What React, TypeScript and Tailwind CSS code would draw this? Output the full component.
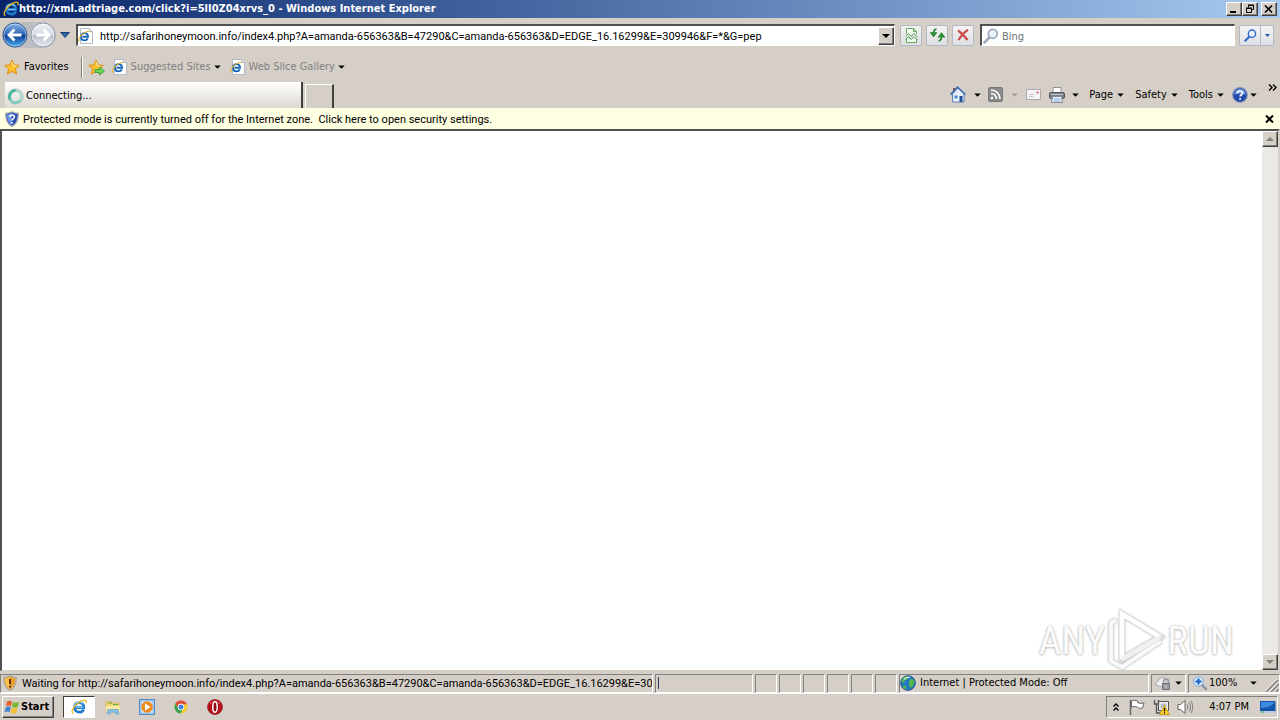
import type { ReactNode } from "react";

function Caret({ className = "fill-black" }: { className?: string }) {
  return (
    <svg width="7" height="4" viewBox="0 0 7 4" className={`shrink-0 ${className}`} aria-hidden="true">
      <path d="M.3.4h6.400L3.500 3.700z" />
    </svg>
  );
}

function IeGlyph({ size = 16 }: { size?: number }) {
  return (
    <svg width={size} height={size} viewBox="0 0 16 16" className="shrink-0" aria-hidden="true">
      <path d="M12.600 10.400c-.8 1.900-2.300 2.800-4.300 2.800-2.900 0-4.700-1.900-4.700-4.700 0-2.900 1.900-4.800 4.700-4.800 2.900 0 4.600 1.900 4.500 4.900H5" fill="none" stroke="#1f78cc" strokeWidth="2.700" />
      <path d="M12.400 8.300H5M3.200 7C3.900 4.700 5.600 3.300 8.200 3.200c1.800 0 3.100.7 3.900 2" fill="none" stroke="#74c8fa" strokeWidth="1.200" />
      <path d="M2.400 14.600C.2 13.800.9 10.600 4 7 7.600 2.800 13 .2 14.700 1.600c.7.600.5 1.700 0 2.700" stroke="#e9b825" strokeWidth="1.300" fill="none" />
    </svg>
  );
}

function IePage({ size = 16 }: { size?: number }) {
  return (
    <svg width={size} height={size} viewBox="0 0 16 16" className="shrink-0" aria-hidden="true">
      <path d="M2.500.5h9l3 3v12h-12z" fill="#fff" stroke="#b5bac3" />
      <path d="M11.500.5v3h3" fill="#e6edf6" stroke="#b5bac3" />
      <path d="M9.800 10.400c-.6 1.300-1.700 2-3.200 2C4.400 12.400 3 10.900 3 8.800s1.500-3.700 3.700-3.700c2.100 0 3.400 1.400 3.300 3.700H4.600" fill="none" stroke="#1565b8" strokeWidth="1.900" />
      <path d="M1.100 13.600C-.2 12.400 1 9.500 4 6.700 7 3.900 10.500 2.700 11.300 4" fill="none" stroke="#e3b22c" strokeWidth="1.100" />
    </svg>
  );
}

function Star({ add = false }: { add?: boolean }) {
  return (
    <svg width="17" height="17" viewBox="0 0 17 17" className="shrink-0" aria-hidden="true">
      <path d="M8 1l2.100 4.900 5.200.5-3.900 3.500 1.200 5.200L8 12.400l-4.600 2.700 1.200-5.200L.7 6.400l5.200-.5z" fill="#fcc02f" stroke="#dc8f14" strokeLinejoin="round" />
      <path d="M8 3l1.300 3.700 3 .5" fill="none" stroke="#fff1a8" />
      {add && <path d="M7 10.500h4.500v-2.500l5 4-5 4v-2.500H7z" fill="#6bd857" stroke="#2a9a2e" strokeWidth=".8" />}
    </svg>
  );
}

function Orb({ back = false }: { back?: boolean }) {
  return (
    <svg width="26" height="26" viewBox="0 0 26 26" aria-hidden="true">
      <defs>
        <linearGradient id={back ? "orbBack" : "orbNext"} x1="0" y1="0" x2="0" y2="1">
          <stop offset="0" stopColor={back ? "#8db8ea" : "#eef1f6"} />
          <stop offset=".48" stopColor={back ? "#2a62b8" : "#d5dae3"} />
          <stop offset=".52" stopColor={back ? "#0c3a92" : "#b9c0cd"} />
          <stop offset="1" stopColor={back ? "#4cb4f4" : "#e7ecf3"} />
        </linearGradient>
      </defs>
      <circle cx="13" cy="13" r="12" fill={back ? "url(#orbBack)" : "url(#orbNext)"} stroke={back ? "#31588f" : "#9099a8"} />
      <circle cx="13" cy="13" r="11" fill="none" stroke="#fff" strokeOpacity=".45" />
      <path
        d={back ? "M19.500 13H7.500M12.500 7.500L7 13l5.500 5.500" : "M6.500 13h12M13.500 7.500L19 13l-5.500 5.500"}
        fill="none"
        stroke="#fff"
        strokeWidth="2.800"
      />
    </svg>
  );
}

function Magnifier({ color, size = 16 }: { color: string; size?: number }) {
  return (
    <svg width={size} height={size} viewBox="0 0 16 16" className="shrink-0" aria-hidden="true">
      <path d="M6.500 9.500L1.500 14.500" stroke={color} strokeWidth="2.500" strokeLinecap="round" />
      <circle cx="9.800" cy="5.800" r="4.500" fill="#e9f1fb" stroke={color} strokeWidth="1.700" />
      <path d="M7.500 5.500c.2-1.300 1-2 2.200-2.100" stroke="#fff" fill="none" />
    </svg>
  );
}

function ShieldIcon({ warn = false }: { warn?: boolean }) {
  return (
    <svg width="14" height="16" viewBox="0 0 14 16" className="shrink-0" aria-hidden="true">
      <path d="M7 .7c2 1.300 4 1.600 6.200 1.600C13.500 8.500 12 13 7 15.400 2 13 .5 8.500.8 2.300 3 2.300 5 2 7 .7z" fill={warn ? "#e9a02c" : "#2850b4"} stroke="#a9adb2" strokeWidth="1.300" />
      <path d="M7 2.200v12C3.500 12 2 8.500 2 3.500c2 0 3.500-.4 5-1.300z" fill={warn ? "#ffc14a" : "#6d9ae8"} />
      {warn ? (
        <path d="M7 4v5.200M7 10.700v1.900" stroke="#5b2c00" strokeWidth="2" />
      ) : (
        <path d="M4.800 6c0-1.200.9-2 2.300-2s2.300.8 2.300 1.900c0 1.500-2.200 1.700-2.200 3.600M7.200 11v1.600" stroke="#fff" strokeWidth="1.500" fill="none" />
      )}
    </svg>
  );
}

function HomeIcon() {
  return (
    <svg width="16" height="17" viewBox="0 0 16 17" className="shrink-0" aria-hidden="true">
      <path d="M3 2h2v4H3z" fill="#9a4c3c" />
      <path d="M2.500 8v8h11.500V8L8 2z" fill="#e8f0fb" stroke="#6480ae" />
      <path d="M.6 8.600L7.500 1.200l7.900 7.400" fill="none" stroke="#3f6fb5" strokeWidth="1.600" />
      <path d="M4.500 9.500h3v3h-3z" fill="#4888d8" />
      <path d="M9.500 10h3v6h-3z" fill="#244f94" />
    </svg>
  );
}

function FeedIcon() {
  return (
    <svg width="15" height="15" viewBox="0 0 15 15" className="shrink-0" aria-hidden="true">
      <rect x=".5" y=".5" width="14" height="14" rx="1.500" fill="#8b8b8b" stroke="#777" />
      <circle cx="4" cy="11" r="1.300" fill="#fff" />
      <path d="M3 6.500A5.500 5.500 0 018.500 12M3 3a9 9 0 019 9" fill="none" stroke="#fff" strokeWidth="1.600" />
    </svg>
  );
}

function MailIcon() {
  return (
    <svg width="15" height="11" viewBox="0 0 15 11" className="shrink-0" aria-hidden="true">
      <rect x=".5" y=".5" width="14" height="10" fill="#f4f4f6" stroke="#a9a9ae" />
      <path d="M10.500 2.500h2v2h-2z" fill="#d26060" />
      <path d="M3 5.500h5M3 7.500h4" stroke="#c4c4ca" />
    </svg>
  );
}

function PrinterIcon() {
  return (
    <svg width="16" height="16" viewBox="0 0 16 16" className="shrink-0" aria-hidden="true">
      <path d="M4 .5h8V6H4z" fill="#fff" stroke="#8d939b" />
      <rect x=".5" y="5.500" width="15" height="6" rx="1.500" fill="#7a7f87" stroke="#555a62" />
      <path d="M2 7.500h12" stroke="#c3c7cc" />
      <path d="M3.500 9.500h9l1 6h-11z" fill="#eef4fd" stroke="#848b94" />
      <path d="M4.500 12h7M4.500 14h7" stroke="#7ba6dc" />
    </svg>
  );
}

function HelpIcon() {
  return (
    <svg width="16" height="16" viewBox="0 0 16 16" className="shrink-0" aria-hidden="true">
      <circle cx="8" cy="8" r="7.300" fill="#2249ae" stroke="#8594b5" strokeWidth="1.300" />
      <path d="M2.500 7.500a5.500 5.500 0 0111 0C10 6.300 6 6.300 2.500 7.500z" fill="#7aa2e6" />
      <path d="M5.600 6.200C5.600 4.700 6.600 4 8 4s2.500.8 2.500 2c0 1.700-2.400 1.800-2.400 3.600M8.100 11v1.700" stroke="#fff" strokeWidth="1.700" fill="none" />
    </svg>
  );
}

function WindowButton({ label, children }: { label: string; children: ReactNode }) {
  return (
    <button
      aria-label={label}
      className="flex h-[14px] w-4 items-center justify-center border border-t-white border-l-white border-r-[#404040] border-b-[#404040] bg-[#d5cfc8] shadow-[inset_-1px_-1px_0_#808080]"
    >
      <svg width="12" height="10" viewBox="0 0 12 10" className="shrink-0" aria-hidden="true">{children}</svg>
    </button>
  );
}

function TitleBar() {
  return (
    <header className="flex h-[18px] shrink-0 items-center bg-linear-to-r from-[#0a246a] to-[#a6caf0] pr-[3px] pl-[3px]">
      <IeGlyph />
      <h1 className="min-w-0 flex-1 truncate text-[11px] font-bold text-white">
        http://xml.adtriage.com/click?i=5lI0Z04xrvs_0 - Windows Internet Explorer
      </h1>
      <div className="flex">
        <WindowButton label="Minimize"><path d="M2 7h6v2H2z" /></WindowButton>
        <WindowButton label="Restore">
          <path d="M4.500 3.500V1.500h5v4H8M4 1h6M2.500 4.500h5v4h-5zM2 4h6" fill="none" stroke="#000" />
        </WindowButton>
        <span className="w-[3px]" />
        <WindowButton label="Close"><path d="M2 1.500l7 7M9 1.500l-7 7" stroke="#000" strokeWidth="1.700" /></WindowButton>
      </div>
    </header>
  );
}

function ToolButton({ label, children }: { label: string; children: ReactNode }) {
  return (
    <button aria-label={label} className="flex h-[21px] w-[22px] shrink-0 items-center justify-center rounded-[2px] border border-[#b4b8c2] bg-linear-to-b from-[#f2f2f2] to-[#dedfe2]">
      {children}
    </button>
  );
}

function NavigationBar() {
  return (
    <div className="flex h-[34px] shrink-0 items-center pr-[6px] pl-[2px]">
      <div className="flex items-center rounded-full bg-[#bdbcc0]">
        <button aria-label="Back"><Orb back /></button>
        <button aria-label="Forward" className="ml-[2px]"><Orb /></button>
      </div>
      <button aria-label="Recent pages" className="mr-[6px] ml-[4px]">
        <svg width="10" height="6" viewBox="0 0 10 6" aria-hidden="true"><path d="M.7.5h8.600L5 5.400z" fill="#2c6bb0" stroke="#173f6b" /></svg>
      </button>
      <div className="flex h-[22px] min-w-0 flex-1 items-center border-t-2 border-l-2 border-r border-b border-t-[#505050] border-l-[#505050] border-r-white border-b-white bg-white">
        <IePage />
        <input
          aria-label="Address"
          className="ml-[6px] h-full min-w-0 flex-1 bg-transparent pt-px font-['Roboto',sans-serif] text-[11px] outline-none"
          defaultValue="http://safarihoneymoon.info/index4.php?A=amanda-656363&B=47290&C=amanda-656363&D=EDGE_16.16299&E=309946&F=*&G=pep"
        />
        <button aria-label="Show addresses" className="flex h-[18px] w-4 items-center justify-center border border-t-white border-l-white border-r-[#404040] border-b-[#404040] bg-[#d5cfc8] shadow-[inset_-1px_-1px_0_#808080]">
          <svg width="8" height="4" viewBox="0 0 8 4" aria-hidden="true"><path d="M0 0h8L4 4z" /></svg>
        </button>
      </div>
      <div className="mr-[6px] ml-[5px] flex gap-1">
        <ToolButton label="Compatibility view">
          <svg width="13" height="15" viewBox="0 0 13 15" aria-hidden="true">
            <path d="M1.500 6V.5h7l3 3V6M1.500 11v3.500h10V11" fill="#f4fbf1" stroke="#62a85e" />
            <path d="M8.500.5v3h3" fill="none" stroke="#62a85e" />
            <path d="M.5 8.500l3-3 2.500 3 3-3 3.500 3.500M.5 11.500l3-3 2.500 3 3-3 3.500 3.500" fill="none" stroke="#4c9c4a" />
          </svg>
        </ToolButton>
        <ToolButton label="Refresh">
          <svg width="15" height="14" viewBox="0 0 15 14" aria-hidden="true">
            <path d="M6.500 1C4.300 1.200 3.500 2.200 3.500 5M.8 4.800h5.400L3.500 8.300z" fill="#3ba53d" stroke="#23862e" strokeWidth="1.300" />
            <path d="M8.500 13c2.200-.2 3-1.200 3-4M8.800 8.800h5.400l-2.700-3.500z" fill="#3ba53d" stroke="#23862e" strokeWidth="1.300" />
          </svg>
        </ToolButton>
        <ToolButton label="Stop">
          <svg width="12" height="12" viewBox="0 0 12 12" aria-hidden="true">
            <path d="M1 1.500C4 3.500 8 8 10.500 11M11 .8C7.500 3 4 7 1.500 11" stroke="#c94a4a" strokeWidth="2.200" fill="none" />
          </svg>
        </ToolButton>
      </div>
      <div className="flex h-[22px] w-[255px] shrink-0 items-center border-t-2 border-l-2 border-r border-b border-t-[#505050] border-l-[#505050] border-r-white border-b-white bg-white pl-px">
        <Magnifier color="#9daab9" />
        <input aria-label="Search" placeholder="Bing" className="ml-[3px] h-full min-w-0 flex-1 bg-transparent pt-px text-[11px] outline-none placeholder:text-[#707070]" />
      </div>
      <div className="ml-1 flex h-[21px] w-[35px] shrink-0 rounded-[2px] border border-[#b4b8c2] bg-linear-to-b from-[#f4f4f5] to-[#dcdfe6]">
        <button aria-label="Search the web" className="flex flex-1 items-center justify-center"><Magnifier color="#2f66cc" size={13} /></button>
        <button aria-label="Search options" className="flex w-[13px] items-center justify-center border-l border-[#b4b8c2]">
          <svg width="5" height="3" viewBox="0 0 5 3" aria-hidden="true"><path d="M0 0h5L2.500 3z" fill="#2458a8" /></svg>
        </button>
      </div>
    </div>
  );
}

function FavoritesBar() {
  return (
    <nav aria-label="Favorites bar" className="flex h-[30px] shrink-0 items-center pl-[4px]">
      <button className="flex items-center gap-[3px]"><Star />Favorites</button>
      <span className="ml-[12px] h-[21px] w-[2px] border-l border-[#808080] border-r border-r-white" />
      <button aria-label="Add to favorites bar" className="ml-[5px]"><Star add /></button>
      <button className="ml-[7px] flex items-center gap-[3px] text-[#808080]"><IePage />Suggested Sites<Caret /></button>
      <button className="ml-[9px] flex items-center gap-[3px] text-[#808080]"><IePage />Web Slice Gallery<Caret /></button>
    </nav>
  );
}

function MenuButton({ children }: { children: ReactNode }) {
  return <button className="flex items-center gap-[4px]">{children}<Caret /></button>;
}

function TabRow() {
  return (
    <div className="flex h-[26px] shrink-0 pl-[5px]">
      <button className="flex w-[298px] shrink-0 items-center gap-[2px] border-r-2 border-[#404040] bg-linear-to-b from-white to-[#ddd9d3] pt-[2px] pl-[2px]">
        <svg width="17" height="17" viewBox="0 0 17 17" aria-hidden="true">
          <circle cx="8.500" cy="8.500" r="6" fill="none" stroke="#b5d9d3" strokeWidth="3" />
          <path d="M8.500 2.500a6 6 0 00-5 9.300" fill="none" stroke="#41b39c" strokeWidth="2.600" />
          <path d="M4 12.500a6 6 0 009 0" fill="none" stroke="#7ccdbc" strokeWidth="2.600" />
          <circle cx="8.500" cy="8.500" r="7.600" fill="none" stroke="#7faaa4" strokeWidth=".5" />
        </svg>
        Connecting...
      </button>
      <button aria-label="New tab" className="mt-[2px] ml-[2px] w-[29px] shrink-0 border-t border-r-2 border-l border-t-white border-r-[#404040] border-l-white" />
      <div className="ml-auto flex h-[25px] items-center pr-[3px]">
        <button aria-label="Home" className="flex items-center gap-[8px]"><HomeIcon /><Caret /></button>
        <button aria-label="Feeds" className="ml-[7px] flex items-center gap-[8px]"><FeedIcon /><Caret className="fill-[#a09c96]" /></button>
        <button aria-label="Read mail" className="ml-[8px]"><MailIcon /></button>
        <button aria-label="Print" className="ml-[8px] flex items-center gap-[7px]"><PrinterIcon /><Caret /></button>
        <div className="ml-[10px] flex gap-[11px]">
          <MenuButton>Page</MenuButton>
          <MenuButton>Safety</MenuButton>
          <MenuButton>Tools</MenuButton>
        </div>
        <button aria-label="Help" className="ml-[8px] flex items-center gap-[2px]"><HelpIcon /><Caret /></button>
        <button aria-label="More commands" className="mb-[14px] ml-[11px]">
          <svg width="9" height="7" viewBox="0 0 9 7" aria-hidden="true"><path d="M1 .5l3 3-3 3M5 .5l3 3-3 3" fill="none" stroke="#000" strokeWidth="1.400" /></svg>
        </button>
      </div>
    </div>
  );
}

function InfoBar() {
  return (
    <div className="flex h-[21px] shrink-0 items-center bg-[#ffffe1] pr-[6px] pl-[5px]">
      <ShieldIcon />
      <button className="ml-[4px] pt-[2px] font-['Roboto',sans-serif] whitespace-pre">Protected mode is currently turned off for the Internet zone.  Click here to open security settings.</button>
      <button aria-label="Close information bar" className="ml-auto">
        <svg width="9" height="8" viewBox="0 0 9 8" aria-hidden="true"><path d="M1 .5l7 7M8 .5l-7 7" stroke="#000" strokeWidth="2" /></svg>
      </button>
    </div>
  );
}

function ScrollButton({ up = false }: { up?: boolean }) {
  return (
    <button aria-label={up ? "Scroll up" : "Scroll down"} className="flex h-4 w-4 items-center justify-center border border-t-white border-l-white border-r-[#404040] border-b-[#404040] bg-[#d5cfc8] shadow-[inset_-1px_-1px_0_#808080]">
      <svg width="8" height="4" viewBox="0 0 8 4" aria-hidden="true"><path d={up ? "M0 4h8L4 0z" : "M0 0h8L4 4z"} fill="#808080" /></svg>
    </button>
  );
}

function Watermark() {
  return (
    <div className="absolute right-[44px] bottom-0 flex h-[62px] items-center gap-[2px] font-['Liberation_Sans_Narrow','Roboto_Condensed',sans-serif] text-[39px] leading-none text-[#fbfbfb] [text-shadow:0_0_2px_#b4b4b4,0_1px_3px_#c4c4c4]">
      <span className="pt-[5px]">ANY</span>
      <svg width="58" height="62" viewBox="0 0 58 62" className="overflow-visible drop-shadow-[0_0_1px_#b0b0b0]" aria-hidden="true">
        <path d="M9 12L4 15v38l11 6 39-26" fill="none" stroke="#e4e4e4" strokeWidth="5" />
        <path d="M9 12L4 15v38l11 6 39-26" fill="none" stroke="#fafafa" strokeWidth="3.500" />
        <path d="M15 6v45l38-22z" fill="none" stroke="#dedede" strokeWidth="6" />
        <path d="M15 51V6l38 23" fill="none" stroke="#fff" strokeWidth="4.500" />
        <path d="M53 29L15 51" fill="none" stroke="#f1f1f1" strokeWidth="4.500" />
      </svg>
      <span className="pt-[5px]">RUN</span>
    </div>
  );
}

function StatusPanel({ className, children }: { className: string; children?: ReactNode }) {
  return (
    <div className={`flex h-[19px] items-center overflow-hidden border border-t-[#808080] border-r-white border-b-white border-l-[#808080] ${className}`}>
      {children}
    </div>
  );
}

function StatusBar() {
  return (
    <footer className="flex h-[23px] shrink-0 items-center gap-[2px] border-b border-white pt-[2px] whitespace-nowrap">
      <StatusPanel className="min-w-0 flex-1 pl-[2px]">
        <ShieldIcon warn />
        <span className="ml-[5px] pt-px font-['Roboto',sans-serif]">Waiting for http://safarihoneymoon.info/index4.php?A=amanda-656363&amp;B=47290&amp;C=amanda-656363&amp;D=EDGE_16.16299&amp;E=30</span>
      </StatusPanel>
      <StatusPanel className="w-[98px] shrink-0 pl-[2px]"><span className="h-[12px] w-px bg-[#263b63]" /></StatusPanel>
      {[0, 1, 2, 3, 4, 5].map((n) => <StatusPanel key={n} className="w-[22px] shrink-0" />)}
      <StatusPanel className="w-[250px] shrink-0 gap-[4px]">
        <svg width="16" height="16" viewBox="0 0 16 16" className="shrink-0" aria-hidden="true">
          <circle cx="8" cy="8" r="7.300" fill="#2177c4" stroke="#225b91" />
          <path d="M3 3c2-2 4-2 6-1.500L8 4 5 5 4 8 1.500 7zM9 6l3-2.500 2.500 3L13 11l-3 2-1-4zM3 10l3 1 .5 3.500L3.500 13z" fill="#53ba48" />
          <path d="M4 4.500C5.500 2.500 8 2 10 2.500" stroke="#d7f3ff" strokeWidth="1.200" fill="none" />
        </svg>
        Internet | Protected Mode: Off
      </StatusPanel>
      <StatusPanel className="w-[35px] shrink-0 gap-[3px] pl-[2px]">
        <svg width="18" height="16" viewBox="0 0 18 16" className="shrink-0" aria-hidden="true">
          <path d="M1 9l6-6 2-1 3 2v5l-5 3z" fill="#eee" stroke="#aaa" />
          <path d="M9.500 9V6.500a2.500 2.500 0 015 0V9" fill="none" stroke="#96979c" strokeWidth="1.500" />
          <rect x="8.500" y="8.500" width="7" height="6" fill="#9697a0" stroke="#75767c" />
          <path d="M12 10.500v2" stroke="#eee" />
        </svg>
        <Caret />
      </StatusPanel>
      <StatusPanel className="w-[92px] shrink-0 pl-[4px]">
        <svg width="15" height="15" viewBox="0 0 15 15" className="shrink-0" aria-hidden="true">
          <path d="M8.500 8.500l4.500 4.500" stroke="#8d97a5" strokeWidth="2.500" strokeLinecap="round" />
          <circle cx="5.500" cy="5.500" r="4.800" fill="#d9ecff" stroke="#7da7d9" />
          <path d="M5.500 2.500v6M2.500 5.500h6" stroke="#1762c4" strokeWidth="2" />
        </svg>
        <button className="ml-px flex flex-1 items-center justify-between">100%<Caret /></button>
        <svg width="14" height="14" viewBox="0 0 14 14" className="ml-[8px] shrink-0 self-end" aria-hidden="true">
          <path d="M1 14L13 2M6 14l8-8M11 14l3-3" stroke="#808080" strokeWidth="1.500" />
          <path d="M0 13L12 1M5 13l8-8" stroke="#fff" strokeWidth=".7" />
        </svg>
      </StatusPanel>
    </footer>
  );
}

function Taskbar() {
  return (
    <div className="flex h-[26px] shrink-0 items-center pr-[2px] pl-[2px]">
      <button className="flex h-[22px] w-[52px] items-center gap-px border border-t-white border-l-white border-r-[#404040] border-b-[#404040] pl-px font-bold shadow-[inset_-1px_-1px_0_#808080]">
        <svg width="16" height="16" viewBox="0 0 16 16" className="shrink-0" aria-hidden="true">
          <path d="M3 2.500c2-1.200 3.500-1 5 0L7 7.300c-1.500-1-3-1-5 0z" fill="#e5602b" />
          <path d="M9 3c1.800 1 3.800 1 6 0l-1.200 5c-2 1-4 .8-5.800-.3z" fill="#78b833" />
          <path d="M1.800 8.300c2-1 3.500-1 5 0l-1.200 5c-1.500-1-3-1-5 0z" fill="#3e83d5" />
          <path d="M7.800 8.800c1.800 1 3.800 1 5.800 0l-1.200 5c-2 1-4 .8-5.800-.3z" fill="#f6bf2f" />
        </svg>
        Start
      </button>
      <nav aria-label="Pinned programs" className="ml-[9px] flex items-center">
        <button aria-label="Internet Explorer" className="flex h-[22px] w-[32px] items-center justify-center border border-t-[#404040] border-r-white border-b-white border-l-[#404040] bg-white"><IeGlyph /></button>
        <button aria-label="File Explorer" className="ml-[10px]">
          <svg width="16" height="16" viewBox="0 0 16 16" aria-hidden="true">
            <path d="M1 2.500h5l1 1.500h7v9H1z" fill="#f0d574" stroke="#d5b350" strokeWidth=".7" />
            <path d="M3 4h4M8 5.500h5" stroke="#65a83a" />
            <path d="M1 7h14v6H1z" fill="#fbeaa1" />
            <path d="M2.500 15v-4.500h11V15h-3v-2h-5v2z" fill="#87c2ea" stroke="#5b9bcb" strokeWidth=".6" />
          </svg>
        </button>
        <button aria-label="Media Player" className="ml-[18px]">
          <svg width="16" height="16" viewBox="0 0 16 16" aria-hidden="true">
            <rect x=".5" y=".5" width="15" height="15" fill="#9bc5ee" stroke="#508cc5" />
            <rect x="2.500" y="2.500" width="11" height="11" fill="#d9e9f8" />
            <circle cx="8" cy="8" r="5.800" fill="#f18a1d" />
            <path d="M6 4.500v7L11.500 8z" fill="#fff" />
          </svg>
        </button>
        <button aria-label="Chrome" className="ml-[19px]">
          <svg width="14" height="14" viewBox="0 0 14 14" aria-hidden="true">
            <circle cx="7" cy="7" r="6.500" fill="#f7c92c" />
            <path d="M1.300 3.800A6.500 6.500 0 0112.900 4.300H7L4.300 8.500z" fill="#df4a38" />
            <path d="M1.300 3.800A6.500 6.500 0 006.400 13.500L9.400 8.500H4.600z" fill="#35a250" />
            <circle cx="7" cy="7" r="3" fill="#3e80e6" stroke="#fff" />
          </svg>
        </button>
        <button aria-label="Opera" className="ml-[19px]">
          <svg width="16" height="16" viewBox="0 0 16 16" aria-hidden="true">
            <circle cx="8" cy="8" r="7.500" fill="#b90f18" stroke="#7f0c10" strokeWidth=".6" />
            <path d="M3 5a6 6 0 0110 0" fill="none" stroke="#e86a6c" />
            <ellipse cx="8" cy="8" rx="2.200" ry="5.300" fill="#8c0a10" stroke="#fff" strokeWidth="1.500" />
          </svg>
        </button>
      </nav>
      <div className="ml-auto flex h-[22px] w-[172px] items-center border border-t-[#808080] border-r-white border-b-white border-l-[#808080] pl-[6px]">
        <button aria-label="Show hidden icons">
          <svg width="6" height="9" viewBox="0 0 6 9" aria-hidden="true"><path d="M.5 3.500L3 1l2.500 2.500M.5 7.500L3 5l2.500 2.500" stroke="#000" strokeWidth="1.300" fill="none" /></svg>
        </button>
        <svg width="16" height="16" viewBox="0 0 16 16" className="ml-[10px]" aria-hidden="true">
          <path d="M1.500 1v15" stroke="#666" strokeWidth="1.500" />
          <path d="M2.500 2c2-1 4-1 6 0v1.500c2 1 4 1 6.500.5L13.500 9c-2 .6-4 .3-5-.8-2-1-4-1-6 0z" fill="#fff" stroke="#666" />
        </svg>
        <svg width="17" height="16" viewBox="0 0 17 16" className="ml-[8px]" aria-hidden="true">
          <path d="M5.500 2.500h10v9h-10z" fill="#f0f0f0" stroke="#555" />
          <path d="M7.500 4.500h6v5h-6z" fill="#b8bcc2" />
          <path d="M1.500 1v4h4V1M3.500 5v9h4" fill="none" stroke="#555" strokeWidth="1.300" />
          <path d="M11.500 6.500l5 9h-10z" fill="#ffd42a" stroke="#b28a00" strokeWidth=".7" />
          <path d="M11.500 9v3.500M11.500 13.300v1.200" stroke="#000" strokeWidth="1.200" />
        </svg>
        <svg width="16" height="16" viewBox="0 0 16 16" className="ml-[7px]" aria-hidden="true">
          <path d="M1 5.500h2.500L8 1.500v13l-4.500-4H1z" fill="#fff" stroke="#666" />
          <path d="M10 5.500c1 1.500 1 3.500 0 5M12 3.500c2 2.500 2 6.500 0 9M14 2c2.200 3.500 2.200 8.500 0 12" fill="none" stroke="#777" />
        </svg>
        <time className="ml-auto">4:07 PM</time>
        <button aria-label="Show desktop" className="mr-px ml-[11px]">
          <svg width="16" height="14" viewBox="0 0 16 14" aria-hidden="true">
            <path d="M0 1h15.500v11H0z" fill="#1454ad" />
            <path d="M1 2h13.500C12 6 7 8 1 8z" fill="#3e8ce0" />
            <path d="M0 11h15.500v2H0z" fill="#b9cbe0" />
            <path d="M1 12h3" stroke="#4caa4c" />
          </svg>
        </button>
      </div>
    </div>
  );
}

export default function App() {
  return (
    <div className="flex h-screen flex-col overflow-hidden bg-[#d5cfc8] font-['DejaVu_Sans_Condensed','Noto_Sans',sans-serif] text-[11px] leading-[14px] text-black">
      <TitleBar />
      <NavigationBar />
      <FavoritesBar />
      <TabRow />
      <InfoBar />
      <main className="relative flex min-h-0 flex-1 border-t-2 border-r-2 border-b border-l-2 border-t-[#505050] border-r-[#d5cfc8] border-b-[#d5cfc8] border-l-[#505050] bg-white">
        <div className="min-w-0 flex-1" />
        <div className="flex w-4 flex-col justify-between bg-[#ebe9e5]">
          <ScrollButton up />
          <ScrollButton />
        </div>
        <Watermark />
      </main>
      <StatusBar />
      <Taskbar />
    </div>
  );
}
